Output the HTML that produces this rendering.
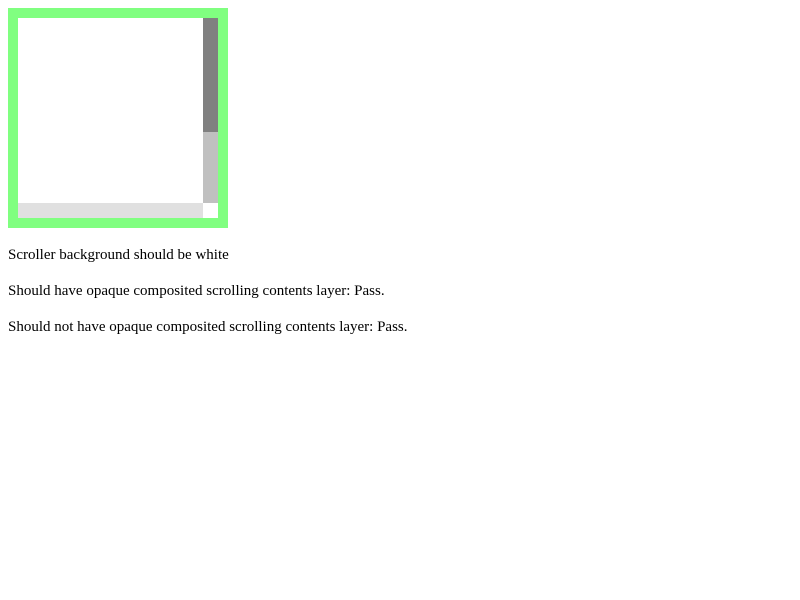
<!DOCTYPE html>
<html><head><style>
html,body{margin:0;background:#fff}
body{margin:8px;font-family:"Liberation Serif",serif;font-size:15px;color:#000}
.box{position:relative;width:200px;height:200px;border:10px solid #80ff80;background:#fff}
.thumb{position:absolute;left:185px;top:0;width:15px;height:114px;background:#808080}
.track{position:absolute;left:185px;top:114px;width:15px;height:71px;background:#c0c0c0}
.h{position:absolute;left:0;top:185px;width:185px;height:15px;background:#e0e0e0}
p{margin:16px 0;line-height:20px;position:relative;top:1px}
</style></head><body>
<div class="box"><div class="thumb"></div><div class="track"></div><div class="h"></div></div>
<p>Scroller background should be white</p>
<p>Should have opaque composited scrolling contents layer: Pass.</p>
<p>Should not have opaque composited scrolling contents layer: Pass.</p>
</body></html>
